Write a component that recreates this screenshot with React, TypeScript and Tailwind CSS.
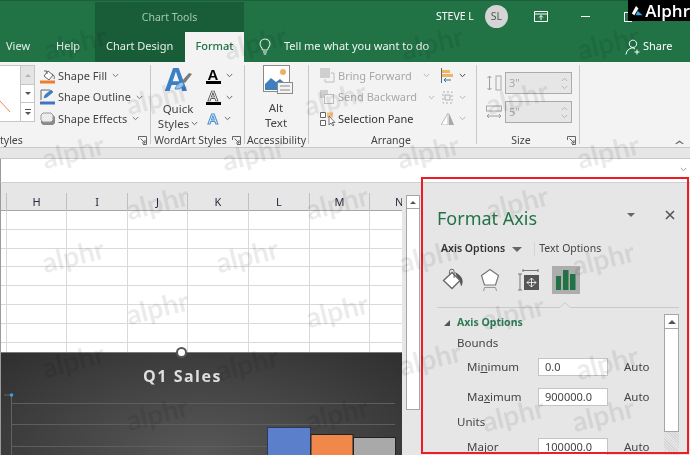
import React from "react";

const font = "font-['Noto_Sans','Open_Sans',sans-serif]";

function Chevron({ className = "" }: { className?: string }) {
  return (
    <svg width="7" height="5" viewBox="0 0 7 5" className={className}>
      <path d="M.8 1l2.7 2.7L6.2 1" fill="none" stroke="currentColor" strokeWidth="1" />
    </svg>
  );
}

function Launcher() {
  return (
    <svg width="9" height="9" viewBox="0 0 9 9" className="text-[#666]">
      <path d="M.5 4V.5H8.5V8.5H5M2.5 2.5L7 7M7 4V7H4" fill="none" stroke="currentColor" strokeWidth="1" />
    </svg>
  );
}

function Watermark({ className }: { className: string }) {
  return (
    <span
      className={`absolute -translate-x-1/2 -translate-y-1/2 -rotate-[14deg] font-['Lato',sans-serif] text-[28px] leading-none font-bold text-black/[0.08] ${className}`}
    >
      alphr
    </span>
  );
}

const marks = [
  "left-[75px] top-[42px]",
  "left-[255px] top-[42px]",
  "left-[432px] top-[42px]",
  "left-[608px] top-[42px]",
  "left-[157px] top-[97px]",
  "left-[335px] top-[98px]",
  "left-[517px] top-[97px]",
  "left-[73px] top-[151px]",
  "left-[253px] top-[153px]",
  "left-[428px] top-[151px]",
  "left-[608px] top-[151px]",
  "left-[157px] top-[202px]",
  "left-[337px] top-[202px]",
  "left-[517px] top-[202px]",
  "left-[73px] top-[255px]",
  "left-[247px] top-[255px]",
  "left-[430px] top-[255px]",
  "left-[603px] top-[258px]",
  "left-[157px] top-[307px]",
  "left-[337px] top-[310px]",
  "left-[513px] top-[312px]",
  "left-[73px] top-[360px]",
  "left-[247px] top-[363px]",
  "left-[430px] top-[358px]",
  "left-[607px] top-[362px]",
  "left-[157px] top-[413px]",
  "left-[337px] top-[413px]",
  "left-[513px] top-[414px]",
  "left-[603px] top-[414px]",
];

function TitleBar() {
  return (
    <div className="flex h-[62px] border-t border-[#1d5f3a] bg-[#217346] text-white">
      <div className="flex w-[95px] items-end gap-[26px] pb-[8px] pl-[6px] text-[11px] text-[#e4efe9]">
        <span>View</span>
        <span>Help</span>
      </div>
      <div className="mt-[1px] flex w-[149px] flex-col bg-[#195c38]">
        <div className="flex h-[30px] items-center justify-center pt-[1px] text-[10.5px] text-[#a5c9b5]">
          Chart Tools
        </div>
        <div className="flex flex-1 items-stretch">
          <div className="flex w-[90px] items-center pb-[1px] pl-[11px] text-[11px] whitespace-nowrap text-[#e4efe9]">
            Chart Design
          </div>
          <div className="flex flex-1 items-center justify-center bg-[#f3f3f3] pb-[1px] text-[11px] font-medium text-[#217346]">
            Format
          </div>
        </div>
      </div>
      <div className="flex flex-1 flex-col">
        <div className="flex h-[31px] items-center pl-[192px]">
          <span className="w-[39px] text-[10.5px] whitespace-nowrap">STEVE L</span>
          <span className="ml-[10px] flex h-[23px] w-[23px] items-center justify-center rounded-full bg-[#d5d5d5] text-[10.5px] text-[#555]">
            SL
          </span>
          <svg width="14" height="11" viewBox="0 0 14 11" className="ml-[26px]">
            <path d="M.5.5h13v10H.5zM.5 3h13M7 9V4.500M5 6.500l2-2 2 2" fill="none" stroke="#fff" />
          </svg>
          <span className="ml-[33px] h-[1px] w-[9px] bg-white" />
          <span className="ml-[34px] h-[10px] w-[8px] border border-white" />
        </div>
        <div className="flex flex-1 items-center pb-[1px]">
          <svg width="12" height="17" viewBox="0 0 12 17" className="ml-[15px]">
            <path
              d="M3.500 12C3 9.500 1 8.500 1 5.800 1 3 3.300 1 6 1s5 2 5 4.800C11 8.500 9 9.500 8.500 12zM4 14h4M4.700 16h2.600"
              fill="none"
              stroke="#fff"
            />
          </svg>
          <span className="ml-[13px] w-[341px] text-[11px] whitespace-nowrap text-[#eef5f1]">
            Tell me what you want to do
          </span>
          <svg width="16" height="16" viewBox="0 0 16 16">
            <path
              d="M8 8.500a3.700 3.700 0 1 0-.1 0zM1 15.500C1.500 11.500 4 9.500 7 8.800c1.200.2 2.200.6 3 1.200M12 10.500v5M9.500 13h5"
              fill="none"
              stroke="#fff"
            />
          </svg>
          <span className="ml-[2px] text-[11px]">Share</span>
        </div>
      </div>
    </div>
  );
}

function Group({ width, children, label, launcher, labelClass = "justify-center" }: {
  width: string;
  children: React.ReactNode;
  label: React.ReactNode;
  launcher?: boolean;
  labelClass?: string;
}) {
  return (
    <div className={`flex flex-col ${width}`}>
      <div className="flex h-[72px] flex-none pt-[3px]">{children}</div>
      <div className={`relative flex h-[13px] items-center text-[10.5px] text-[#444] ${labelClass}`}>
        {label}
        {launcher && (
          <span className="absolute right-[3px] top-[2px] flex">
            <Launcher />
          </span>
        )}
      </div>
    </div>
  );
}

function Separator() {
  return <div className="mt-[3px] h-[79px] w-[1px] flex-none bg-[#c8c8c8]" />;
}

function ShapeRow({ icon, label }: { icon: React.ReactNode; label: string }) {
  return (
    <div className="flex h-[21.500px] items-center whitespace-nowrap">
      <span className="flex w-[18px] justify-start">{icon}</span>
      <span className="text-[11px] text-[#444]">{label}</span>
      <Chevron className="ml-[5px] text-[#777]" />
    </div>
  );
}

function WordArtRow({ icon, chevron }: { icon: React.ReactNode; chevron: string }) {
  return (
    <div className="flex h-[21.500px] items-center">
      <span className="flex w-[16px] justify-center">{icon}</span>
      <Chevron className={`text-[#666] ${chevron}`} />
    </div>
  );
}

function LetterA({ bar, className }: { bar?: boolean; className: string }) {
  return (
    <span className="flex flex-col items-center">
      <span className={`font-['Liberation_Sans',sans-serif] text-[15px] leading-[13px] font-bold ${className}`}>A</span>
      {bar && <span className="h-[3px] w-[15px] bg-black" />}
    </span>
  );
}

function ArrangeRow({ icon, label, disabled, chevron }: {
  icon: React.ReactNode;
  label: string;
  disabled?: boolean;
  chevron?: boolean;
}) {
  return (
    <div className="flex h-[21.500px] items-center whitespace-nowrap">
      <span className="flex w-[18px] justify-start">{icon}</span>
      <span className={`text-[11px] ${disabled ? "text-[#a8a8a8]" : "text-[#333]"}`}>{label}</span>
      {chevron && <Chevron className="ml-[11px] text-[#b5b5b5]" />}
    </div>
  );
}

function SizeInput({ value, icon }: { value: string; icon: React.ReactNode }) {
  return (
    <div className="flex items-center">
      <span className="flex w-[19px] justify-start">{icon}</span>
      <div className="flex h-[22px] w-[67px] items-center justify-between border border-[#ababab] bg-[#e6e6e6] pr-[3px] pl-[3px] text-[11px] text-[#a8a8a8]">
        {value}
        <span className="flex flex-col gap-[3px] text-[#b5b5b5]">
          <Chevron className="rotate-180" />
          <Chevron />
        </span>
      </div>
    </div>
  );
}

function Ribbon() {
  return (
    <div className="relative flex h-[85px] bg-[#f3f3f3]">
      <Group
        width="w-[150px]"
        label={<span>tyles</span>}
        launcher
        labelClass="justify-start"
      >
        <div className="flex h-[57px] w-[35px] border border-l-0 border-[#c6c6c6] bg-white">
          <div className="relative w-[20px]">
            <svg width="20" height="55" viewBox="0 0 20 55">
              <path d="M0 35L10 46" stroke="#ed8b4a" strokeWidth="1" fill="none" />
            </svg>
          </div>
          <div className="flex w-[14px] flex-col border-l border-[#c6c6c6] text-[#555]">
            <div className="flex h-[19px] items-center justify-center border-b border-[#c6c6c6] bg-[#e4e4e4]">
              <span className="h-0 w-0 border-x-[3px] border-b-[3px] border-x-transparent border-b-[#b5b5b5]" />
            </div>
            <div className="flex h-[18px] items-center justify-center border-b border-[#c6c6c6]">
              <span className="h-0 w-0 border-x-[3px] border-t-[3px] border-x-transparent border-t-[#555]" />
            </div>
            <div className="flex flex-1 flex-col items-center justify-center gap-[2px]">
              <span className="h-[1px] w-[6px] bg-[#555]" />
              <span className="h-0 w-0 border-x-[3px] border-t-[3px] border-x-transparent border-t-[#555]" />
            </div>
          </div>
        </div>
        <div className="ml-[5px] flex flex-col">
          <ShapeRow
            label="Shape Fill"
            icon={
              <svg width="16" height="16" viewBox="0 0 16 16">
                <path d="M4 8l4-5 5 4-4 5z" fill="#fff" stroke="#666" />
                <path d="M4 3h3v3M12 6c2 1 3 3 2 5" fill="none" stroke="#666" />
                <rect x="0" y="12.500" width="15" height="3" fill="#ed7d31" />
              </svg>
            }
          />
          <ShapeRow
            label="Shape Outline"
            icon={
              <svg width="16" height="16" viewBox="0 0 16 16">
                <path d="M1 11V1h9" fill="none" stroke="#666" />
                <path d="M4 9l1-3 6-5 2 2-6 5z" fill="#3b7fc4" stroke="#2f6ea8" strokeWidth=".6" />
                <rect x="0" y="12.500" width="15" height="3" fill="#4472c4" />
              </svg>
            }
          />
          <ShapeRow
            label="Shape Effects"
            icon={
              <svg width="16" height="14" viewBox="0 0 16 14">
                <path d="M3 3h10l2 2v6l-2 2H3l-2-2V5z" fill="#8a8a8a" />
                <path d="M3 1h8l2 2v5l-2 2H3L1 8V3z" fill="#ececec" stroke="#999" />
              </svg>
            }
          />
        </div>
      </Group>
      <Separator />
      <Group width="w-[93px]" label={<span className="pr-[14px] whitespace-nowrap">WordArt Styles</span>} launcher>
        <div className="flex w-[54px] flex-col items-center">
          <div className="relative h-[32px] w-[30px]">
            <span className="absolute left-[1px] top-[-2px] font-['Liberation_Sans',sans-serif] text-[33px] leading-[33px] font-bold text-[#3b7fc4]">
              A
            </span>
            <svg width="30" height="32" viewBox="0 0 30 32" className="absolute left-[2px] top-0">
              <path d="M27 9l-7 9-3-2 7-8z" fill="#7b7b7b" />
              <path d="M17 17c-4 1-6 4-7 7 4 1 8-2 9-5z" fill="#9cc3e6" stroke="#3b7fc4" strokeWidth=".8" />
            </svg>
          </div>
          <div className="mt-[4px] flex flex-col items-center text-[11.5px] leading-[15px] text-[#444]">
            <span>Quick</span>
            <span className="flex items-center whitespace-nowrap">
              Styles
              <Chevron className="ml-[2px] text-[#666]" />
            </span>
          </div>
        </div>
        <div className="flex flex-col">
          <WordArtRow chevron="ml-[5px]" icon={<LetterA bar className="text-black" />} />
          <WordArtRow
            chevron="ml-[5px]"
            icon={<LetterA bar className="text-[#e8e8e8] [-webkit-text-stroke:0.7px_#333]" />}
          />
          <WordArtRow
            chevron="ml-[3px]"
            icon={<LetterA className="text-[#eaf3fb] [-webkit-text-stroke:1px_#4a90d0]" />}
          />
        </div>
      </Group>
      <Separator />
      <Group width="w-[63px]" label={<span className="whitespace-nowrap">Accessibility</span>}>
        <div className="flex w-full flex-col items-center pr-[1px]">
          <svg width="30" height="30" viewBox="0 0 30 30" className="ml-[3px]">
            <rect x=".5" y=".5" width="26" height="26" fill="#fff" stroke="#8a8a8a" />
            <circle cx="20" cy="7" r="3" fill="#efb061" />
            <path d="M2 25V19l6-6 5 4 4-3 7 6v5z" fill="#3f7fbc" />
            <rect x="14.500" y="17.500" width="15" height="11" fill="#f3f3f3" stroke="#8a8a8a" />
            <path d="M17 21h10M17 25h10" stroke="#8a8a8a" />
          </svg>
          <div className="mt-[5px] flex flex-col items-center text-[11.5px] leading-[15px] text-[#444]">
            <span>Alt</span>
            <span>Text</span>
          </div>
        </div>
      </Group>
      <Separator />
      <Group width="w-[167px]" label={<span className="pr-[3px]">Arrange</span>}>
        <div className="ml-[11px] flex w-[121px] flex-col">
          <ArrangeRow
            disabled
            chevron
            label="Bring Forward"
            icon={
              <svg width="15" height="15" viewBox="0 0 15 15">
                <rect x="0" y="0" width="10" height="10" fill="#cfcfcf" />
                <path d="M11 5h3v9H5v-3" fill="none" stroke="#bcbcbc" />
              </svg>
            }
          />
          <ArrangeRow
            disabled
            chevron
            label="Send Backward"
            icon={
              <svg width="15" height="15" viewBox="0 0 15 15">
                <path d="M0 0h8v4H4v4H0z" fill="#cfcfcf" />
                <rect x="4.500" y="4.500" width="9" height="9" fill="none" stroke="#bcbcbc" />
              </svg>
            }
          />
          <ArrangeRow
            label="Selection Pane"
            icon={
              <svg width="16" height="16" viewBox="0 0 16 16">
                <path d="M.5 1.500h5v5h-5zM.5 9.500h5v5h-5z" fill="#fff" stroke="#666" />
                <rect x="7" y="1.500" width="6" height="5" fill="#f3c27f" />
                <path d="M9 5v9l2-2 2 3 1-1-2-2.500h3z" fill="#fff" stroke="#555" strokeWidth=".8" />
              </svg>
            }
          />
        </div>
        <div className="flex flex-col">
          <div className="flex h-[21.500px] items-center">
            <svg width="13" height="15" viewBox="0 0 13 15">
              <path d="M.5 0v15" stroke="#666" />
              <rect x="1" y="2" width="8" height="3" fill="#f0b560" />
              <rect x="1" y="6" width="11" height="3" fill="#f0b560" />
              <path d="M3 12h7M3 12l2-2M3 12l2 2" stroke="#2e75b6" fill="none" />
            </svg>
            <Chevron className="ml-[5px] text-[#444]" />
          </div>
          <div className="flex h-[21.500px] items-center">
            <svg width="13" height="15" viewBox="0 0 13 15">
              <path d="M2 2h9v11H2z" fill="none" stroke="#b0b0b0" strokeDasharray="2 2" />
              <path d="M4 5h5v5H4z" fill="none" stroke="#b0b0b0" />
            </svg>
            <Chevron className="ml-[5px] text-[#b5b5b5]" />
          </div>
          <div className="flex h-[21.500px] items-center">
            <svg width="13" height="13" viewBox="0 0 13 13">
              <path d="M7 1v12H0z" fill="#fff" stroke="#bcbcbc" />
              <path d="M8 1v12h5z" fill="#a8a8a8" />
            </svg>
            <Chevron className="ml-[5px] text-[#b5b5b5]" />
          </div>
        </div>
      </Group>
      <Separator />
      <Group width="w-[102px]" label={<span className="pr-[14px]">Size</span>} launcher>
        <div className="flex flex-col gap-[7px] pt-[7px] pl-[9px]">
          <SizeInput
            value={'3"'}
            icon={
              <svg width="16" height="16" viewBox="0 0 16 16">
                <path d="M3.500 1v14M1.500 3l2-2 2 2M1.500 13l2 2 2-2" fill="none" stroke="#9c9c9c" />
                <rect x="10" y="1" width="5" height="14" fill="#f3f3f3" stroke="#a8a8a8" />
              </svg>
            }
          />
          <SizeInput
            value={'5"'}
            icon={
              <svg width="16" height="15" viewBox="0 0 16 15">
                <rect x=".5" y="1" width="15" height="5" fill="#f3f3f3" stroke="#a8a8a8" />
                <path d="M1 11h14M3 9l-2 2 2 2M13 9l2 2-2 2" fill="none" stroke="#9c9c9c" />
              </svg>
            }
          />
        </div>
      </Group>
      <Separator />
      <Chevron className="absolute right-[7px] top-[78px] scale-x-[1.4] rotate-180 text-[#666]" />
    </div>
  );
}

const columns = ["", "H", "I", "J", "K", "L", "M"];
const gridCols = "grid-cols-[6px_60px_61px_60px_61px_61px_60px_32px]";

function Sheet() {
  return (
    <div className="flex w-[421px] flex-none flex-col border-l border-[#9a9a9a] bg-[#e6e6e6]">
      <div className="h-[10px] flex-none" />
      <div className="flex min-h-0 flex-1">
        <div className="flex w-[401px] flex-none flex-col">
          <div className={`grid h-[18px] flex-none ${gridCols} border-b border-[#a6a6a6]`}>
            {columns.map((c) => (
              <div
                key={c}
                className="flex items-center justify-center border-r border-[#c0c0c0] pt-[1px] text-[11px] text-[#2a2a40]"
              >
                {c}
              </div>
            ))}
            <div className="overflow-hidden pl-[25px] text-[11px] leading-[18px] text-[#2a2a40]">N</div>
          </div>
          <div className="h-[141px] flex-none overflow-hidden bg-white">
            {Array.from({ length: 8 }).map((_, r) => (
              <div key={r} className={`grid h-[18.800px] ${gridCols}`}>
                {[...columns, "N"].map((c) => (
                  <div key={c} className="border-r border-b border-[#d9d9d9] last:border-r-0" />
                ))}
              </div>
            ))}
          </div>
          <div className="relative min-h-0 flex-1 border-t border-[#7a7a7a] bg-[radial-gradient(ellipse_at_50%_100%,#585858,#444_50%,#2f2f2f_100%)]">
            <span className="absolute left-[175px] top-[-6px] h-[11px] w-[11px] rounded-full border-2 border-[#555] bg-white" />
            <div className="pt-[13px] pr-[38px] text-center font-['Open_Sans',sans-serif] text-[16px] leading-[20px] font-bold tracking-[1.500px] text-[#dedede]">
              Q1 Sales
            </div>
            <svg width="401" height="68" viewBox="0 0 401 68" className="mt-[1px] block">
              <path d="M11 16.500H394M11 37.500H394M11 59.500H394" stroke="#5e5e5e" strokeWidth="1" fill="none" />
              <path d="M10.500 8V68M3 8H11" stroke="#626262" fill="none" />
              <circle cx="10.500" cy="8" r="1.800" fill="#3ba0dc" />
              <rect x="266.500" y="40.500" width="43" height="30" fill="#5b7fcb" stroke="#2b3a57" strokeWidth="1" />
              <rect x="310" y="47.500" width="42" height="30" fill="#f0884c" stroke="#222" strokeWidth="1" />
              <rect x="352.500" y="50.500" width="42" height="30" fill="#a9a9a9" stroke="#222" strokeWidth="1" />
            </svg>
          </div>
        </div>
        <div className="ml-[4px] flex w-[14px] flex-none flex-col pt-[2px]">
          <div className="flex h-[14px] flex-none items-center justify-center border border-[#a6a6a6] bg-white">
            <span className="h-0 w-0 border-x-[3px] border-b-[3px] border-x-transparent border-b-[#555]" />
          </div>
          <div className="h-[201px] flex-none border border-t-0 border-[#a6a6a6] bg-white" />
        </div>
      </div>
    </div>
  );
}

function FieldRow({ label, value }: { label: React.ReactNode; value: string }) {
  return (
    <div className="flex h-[30px] items-center pl-[46px] text-[11.5px] text-[#444]">
      <span className="w-[71px]">{label}</span>
      <div className="flex h-[18px] w-[70px] items-center border border-[#c4c4c4] bg-white pl-[6px] text-[11px] text-[#444]">
        {value}
      </div>
      <span className="ml-[16px]">Auto</span>
    </div>
  );
}

function Pane() {
  return (
    <div className="flex flex-1 flex-col overflow-hidden bg-[#e6e6e6] pr-[2px]">
      <div className="flex h-[48px] flex-none items-end pl-[16px]">
        <span className="w-[100px] text-[18px] leading-[26px] whitespace-nowrap text-[#217346]">Format Axis</span>
        <span className="mb-[14px] ml-[90px] h-0 w-0 border-x-[4px] border-t-[4px] border-x-transparent border-t-[#666]" />
        <svg width="10" height="10" viewBox="0 0 10 10" className="mb-[11px] ml-[30px]">
          <path d="M1 1l8 8M9 1l-8 8" stroke="#555" strokeWidth="1.600" />
        </svg>
      </div>
      <div className="mt-[8px] flex h-[20px] flex-none items-center pl-[20px] text-[10.5px]">
        <span className="font-semibold text-[#333]">Axis Options</span>
        <span className="ml-[7px] h-0 w-0 border-x-[5px] border-t-[5px] border-x-transparent border-t-[#666]" />
        <span className="ml-[12px] h-[14px] w-[1px] bg-[#d4d4d4]" />
        <span className="ml-[4px] text-[#444]">Text Options</span>
      </div>
      <div className="mt-[7px] flex h-[28px] flex-none items-center pl-[21px]">
        <svg width="23" height="24" viewBox="0 0 23 24">
          <path d="M13 4c4 2 7 5 7.500 8 .4 2.500-.3 5-1.500 6.500-.3-3-1-5-3-6.500z" fill="#555" />
          <path d="M1.500 12.500L10 4.500l8 8-8 8z" fill="#fff" stroke="#666" strokeWidth="1.300" />
          <path d="M7.500 7V3.500a2.300 2.300 0 0 1 4.600 0V10" fill="none" stroke="#666" strokeWidth="1" />
        </svg>
        <svg width="20" height="24" viewBox="0 0 20 24" className="ml-[15px]">
          <path d="M10 1.500l8.500 6-3 9.500h-11l-3-9.500z" fill="#fff" stroke="#777" strokeWidth="1.200" />
          <path d="M4.500 19.500h11M3.500 23l1-3.500M16.500 23l-1-3.500" stroke="#999" fill="none" />
        </svg>
        <svg width="22" height="24" viewBox="0 0 22 24" className="ml-[17px]">
          <path d="M6 2.500h15M6 1v3M21 1v3M1 6h4M1 22h4M3 6v16" fill="none" stroke="#777" />
          <rect x="7" y="7" width="15" height="15" fill="#555" />
          <path d="M14.500 10v9M10 14.500h9M12.500 12l2-2 2 2M12.500 17l2 2 2-2M12 12.500l-2 2 2 2M17 12.500l2 2-2 2" fill="none" stroke="#fff" strokeWidth=".8" />
        </svg>
        <div className="ml-[13px] flex h-[28px] w-[28px] items-center justify-center bg-[#adadad]">
          <svg width="20" height="20" viewBox="0 0 20 20">
            <rect x="0" y="6" width="5" height="14" fill="#217346" />
            <rect x="7" y="0" width="5.500" height="20" fill="#217346" />
            <rect x="14" y="4" width="5.500" height="16" fill="#217346" />
          </svg>
        </div>
      </div>
      <svg width="267" height="8" viewBox="0 0 267 8" className="mt-[6px] block flex-none">
        <path d="M16 7.500H139L144 2.500 149 7.500H258" stroke="#c9c9c9" fill="#e6e6e6" />
      </svg>
      <div className="flex flex-none pt-[6px]">
        <div className="flex-1">
          <div className="flex h-[17px] items-center pl-[23px]">
            <span className="h-0 w-0 border-b-[6px] border-l-[6px] border-b-[#555] border-l-transparent" />
            <span className="ml-[7px] text-[10.5px] font-bold text-[#2e7d56]">Axis Options</span>
          </div>
          <div className="mt-[3px] flex h-[18px] items-center pl-[36px] text-[11.5px] text-[#444]">Bounds</div>
          <FieldRow
            value="0.0"
            label={
              <>
                Mi<span className="underline">n</span>imum
              </>
            }
          />
          <FieldRow
            value="900000.0"
            label={
              <>
                Ma<span className="underline">x</span>imum
              </>
            }
          />
          <div className="flex h-[20px] items-center pl-[36px] text-[11.5px] text-[#444]">Units</div>
          <FieldRow value="100000.0" label="Major" />
        </div>
        <div className="mr-[9px] flex w-[15px] flex-none flex-col bg-[repeating-linear-gradient(45deg,#d6d6d6_0,#d6d6d6_1px,#e6e6e6_1px,#e6e6e6_2px)]">
          <div className="flex h-[15px] flex-none items-center justify-center border border-[#a6a6a6] bg-white">
            <span className="h-0 w-0 border-x-[4px] border-b-[4px] border-x-transparent border-b-[#555]" />
          </div>
          <div className="h-[103px] flex-none border border-t-0 border-[#a6a6a6] bg-white" />
        </div>
      </div>
    </div>
  );
}

export default function App() {
  return (
    <div className={`relative h-[455px] w-[690px] overflow-hidden bg-white blur-[0.35px] ${font}`}>
      <TitleBar />
      <Ribbon />
      <div className="h-[12px] border-y border-[#c8c8c8] bg-[#e6e6e6]" />
      <div className="flex h-[24px] justify-end border-l border-[#9a9a9a] border-b border-b-[#d0d0d0] bg-white pt-[8px] pr-[3px]">
        <Chevron className="text-[#999]" />
      </div>
      <div className="flex h-[272px]">
        <Sheet />
        <Pane />
      </div>
      <div className="pointer-events-none absolute left-[421px] top-[177px] h-[277px] w-[268px] border-2 border-[#ee1c25]" />
      <div className="pointer-events-none absolute inset-0">
        {marks.map((m) => (
          <Watermark key={m} className={m} />
        ))}
      </div>
      <div className="absolute right-0 top-0 flex h-[21px] w-[62px] items-center bg-black pl-[3px] text-white">
        <svg width="16" height="14" viewBox="0 0 16 14">
          <path d="M6 1L1 10l3 2L9 4z" fill="#fff" />
          <path d="M8 7l-2.500 5H14z" fill="#3ba7e0" />
        </svg>
        <span className="ml-[1px] font-['Open_Sans',sans-serif] text-[17px] leading-none font-semibold">Alphr</span>
      </div>
    </div>
  );
}
